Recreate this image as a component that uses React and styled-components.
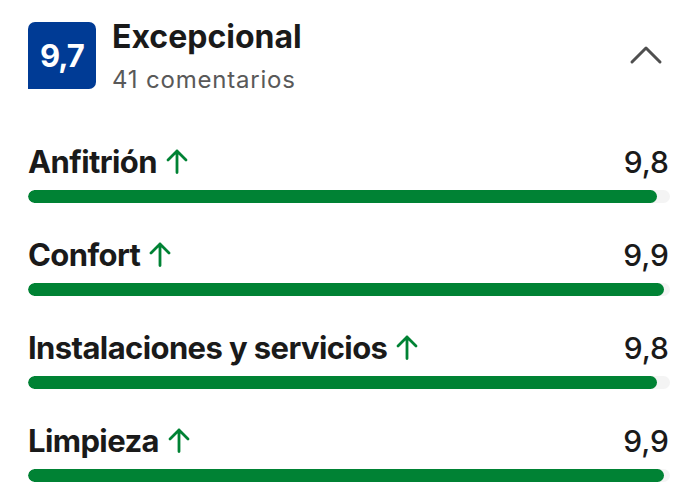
import React from "react";
import styled, { createGlobalStyle } from "styled-components";

const Global = createGlobalStyle`
  html, body { margin: 0; padding: 0; background: #ffffff; }
  body { font-family: Inter, "Noto Sans", sans-serif; color: #1a1a1a; }
`;

const Page = styled.div`
  width: 700px;
  height: 500px;
  box-sizing: border-box;
  padding: 22px 30px 0 28px;
  overflow: hidden;
`;

const Header = styled.div`
  display: flex;
  align-items: flex-start;
  gap: 16px;
`;

const Badge = styled.div`
  flex: none;
  width: 68px;
  height: 67px;
  background: #003b95;
  border-radius: 7px 7px 7px 0;
  color: #fff;
  display: flex;
  align-items: center;
  justify-content: center;
  font-size: 31px;
  font-weight: 700;
  letter-spacing: -1px;
`;

const HeaderText = styled.div`
  flex: 1;
  display: flex;
  flex-direction: column;
`;

const Title = styled.div`
  margin-top: -3px;
  font-size: 32px;
  font-weight: 700;
  line-height: 36px;
  color: #1a1a1a;
`;

const Sub = styled.div`
  font-size: 24px;
  font-weight: 400;
  line-height: 28px;
  margin-top: 11px;
  letter-spacing: 0.8px;
  color: #595959;
`;

const Chevron = styled.svg`
  flex: none;
  margin-top: 23px;
  margin-right: 7px;
`;

const List = styled.div`
  margin-top: 51px;
  display: flex;
  flex-direction: column;
  gap: 35px;
`;

const Row = styled.div`
  display: flex;
  flex-direction: column;
  gap: 11px;
`;

const LabelLine = styled.div`
  display: flex;
  align-items: center;
  justify-content: space-between;
  height: 34px;
  line-height: 34px;
`;

const Label = styled.div`
  display: flex;
  align-items: center;
  gap: 9px;
  font-size: 31px;
  font-weight: 700;
  letter-spacing: -0.6px;
  color: #1a1a1a;
`;

const Score = styled.div`
  font-size: 30px;
  font-weight: 500;
  color: #1a1a1a;
  margin-right: 1px;
`;

const Track = styled.div`
  height: 13px;
  border-radius: 7px;
  background: #f4f4f4;
  overflow: hidden;
`;

const Fill = styled.div`
  height: 100%;
  border-radius: 7px;
  background: #008234;
`;

const ArrowIcon = styled.svg`
  flex: none;
  margin-top: -2px;
`;

const UpArrow = () => (
  <ArrowIcon width="22" height="26" viewBox="0 0 22 26" fill="none">
    <path d="M11 24.5V3M2 12L11 3l9 9" stroke="#008234" strokeWidth="2.8" strokeLinecap="round" strokeLinejoin="round" />
  </ArrowIcon>
);

const rows = [
  { label: "Anfitrión", score: "9,8", pct: 98 },
  { label: "Confort", score: "9,9", pct: 99 },
  { label: "Instalaciones y servicios", score: "9,8", pct: 98 },
  { label: "Limpieza", score: "9,9", pct: 99 },
];

export default function App() {
  return (
    <Page>
      <Global />
      <Header>
        <Badge>9,7</Badge>
        <HeaderText>
          <Title>Excepcional</Title>
          <Sub>41 comentarios</Sub>
        </HeaderText>
        <Chevron width="34" height="20" viewBox="0 0 34 20" fill="none">
          <path d="M3 17L17 3l14 14" stroke="#4f4f4f" strokeWidth="3" strokeLinecap="round" strokeLinejoin="round" />
        </Chevron>
      </Header>
      <List>
        {rows.map((r) => (
          <Row key={r.label}>
            <LabelLine>
              <Label>
                {r.label}
                <UpArrow />
              </Label>
              <Score>{r.score}</Score>
            </LabelLine>
            <Track>
              <Fill style={{ width: `${r.pct}%` }} />
            </Track>
          </Row>
        ))}
      </List>
    </Page>
  );
}
